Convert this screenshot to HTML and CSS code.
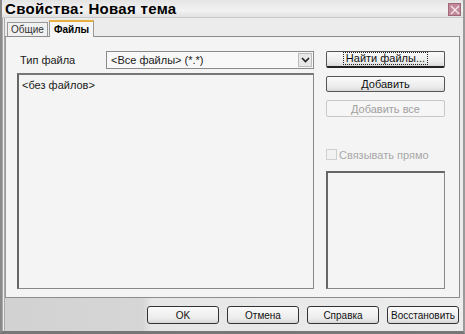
FILE: index.html
```html
<!DOCTYPE html>
<html>
<head>
<meta charset="utf-8">
<link rel="stylesheet" href="styles.css">
</head>
<body>
<div class="window">
  <div class="titlebar">
    <span class="title">Свойства: Новая тема</span>
    <span class="close"><svg width="10" height="10" viewBox="0 0 10 10"><path d="M1 1L9 9M9 1L1 9" stroke="#f4e8ec" stroke-width="1.4"/></svg></span>
  </div>
  <div class="frame">
    <div class="tabs">
      <div class="tab">Общие</div>
      <div class="tab active">Файлы</div>
    </div>
    <div class="panel">
      <div class="left">
        <div class="row">
          <span class="label">Тип файла</span>
          <div class="select">
            <span class="value">&lt;Все файлы&gt; (*.*)</span>
            <span class="arrow"><svg width="9" height="6" viewBox="0 0 9 6"><path d="M1 1L4.5 4.5L8 1" fill="none" stroke="#222" stroke-width="1.6"/></svg></span>
          </div>
        </div>
        <div class="list">&lt;без файлов&gt;</div>
      </div>
      <div class="right">
        <button class="btn default"><span class="focus">Найти файлы...</span></button>
        <button class="btn">Добавить</button>
        <button class="btn disabled">Добавить все</button>
        <div class="check"><span class="box"></span><span>Связывать прямо</span></div>
        <div class="preview"></div>
      </div>
    </div>
    <div class="footer">
      <button class="btn fbtn">OK</button>
      <button class="btn fbtn">Отмена</button>
      <button class="btn fbtn">Справка</button>
      <button class="btn fbtn">Восстановить</button>
    </div>
  </div>
</div>
</body>
</html>
```

FILE: styles.css
```css
* { box-sizing: border-box; }
html, body { margin: 0; padding: 0; }
body {
  width: 465px;
  height: 334px;
  overflow: hidden;
  background: #d8d8d8;
  font-family: "Liberation Sans", Arial, sans-serif;
  font-size: 11px;
  color: #1a1a1a;
}
.window {
  width: 465px;
  height: 334px;
  display: flex;
  flex-direction: column;
  border-left: 2px solid #8a8a8a;
  border-bottom: 3px solid #777;
  border-right: 2px solid #9a9a9a;
}
.titlebar {
  height: 18px;
  display: flex;
  align-items: center;
  justify-content: space-between;
  padding: 0 2px 0 3px;
  background: linear-gradient(#e4e4e4, #f2f2f2 60%, #e2e2e2);
  border-bottom: 1px solid #c8c8c8;
}
.title {
  font-weight: bold;
  font-size: 15px;
  color: #000;
  letter-spacing: 0.3px;
}
.close {
  width: 13px;
  height: 13px;
  margin-top: 2px;
  background: #c08898;
  border: 1px solid #a06878;
  display: flex;
  align-items: center;
  justify-content: center;
}
.frame {
  flex: 1;
  display: flex;
  flex-direction: column;
  border-left: 3px double #aaa;
  background: #ececec;
}
.tabs {
  height: 17px;
  display: flex;
  align-items: flex-end;
  padding-left: 2px;
  margin-top: 1px;
}
.tab {
  height: 14px;
  padding: 0 3px;
  border: 1px solid #999;
  border-bottom: none;
  background: #f0f0f0;
  font-size: 10px;
  line-height: 13px;
  color: #333;
}
.tab.active {
  height: 17px;
  padding: 0 4px;
  margin-left: 1px;
  font-weight: bold;
  color: #000;
  background: #f6f6f6;
  border-top: 2px solid #e8b040;
  line-height: 15px;
  margin-bottom: -1px;
  position: relative;
  z-index: 1;
}
.panel {
  height: 262px;
  display: flex;
  gap: 12px;
  padding: 14px 10px 8px 11px;
  background: #f4f4f4;
  border: 1px solid #8c8c8c;
  border-left: 1px solid #999;
  margin-right: 3px;
}
.left {
  width: 297px;
  display: flex;
  flex-direction: column;
  gap: 4px;
}
.row {
  display: flex;
  align-items: center;
  justify-content: space-between;
  height: 18px;
}
.label {
  padding-left: 3px;
  font-size: 11px;
}
.select {
  width: 208px;
  height: 18px;
  display: flex;
  align-items: center;
  justify-content: space-between;
  border: 1px solid #8a8a8a;
  background: #f8f8f8;
  padding-left: 4px;
}
.value { font-size: 11px; }
.arrow {
  width: 14px;
  height: 14px;
  margin-right: 1px;
  border: 1px solid #bbb;
  background: #e8e8e8;
  display: flex;
  align-items: center;
  justify-content: center;
}
.list {
  flex: 1;
  border: 1px solid #888;
  border-left: 2px solid #666;
  border-top: 2px solid #777;
  background: #f4f4f4;
  padding: 4px 3px;
  font-size: 11px;
}
.right {
  width: 119px;
  display: flex;
  flex-direction: column;
}
.btn {
  font-family: "Liberation Sans", Arial, sans-serif;
  font-size: 11px;
  color: #111;
  height: 17px;
  padding: 0;
  border: 1px solid #555;
  border-radius: 2px;
  background: linear-gradient(#fafafa, #ececec 70%, #d8d8d8);
  display: flex;
  align-items: center;
  justify-content: center;
}
.right .btn { width: 119px; margin-bottom: 8px; }
.right .btn.default {
  border-bottom: 2px solid #222;
  margin-bottom: 8px;
}
.focus {
  border: 1px dotted #222;
  padding: 0 2px;
  line-height: 11px;
}
.btn.disabled {
  color: #a0a0a0;
  border-color: #c8c8c8;
  background: #f6f6f6;
}
.check {
  display: flex;
  align-items: center;
  gap: 2px;
  margin-top: 24px;
  height: 12px;
  color: #a8a8a8;
  font-size: 11px;
}
.box {
  width: 11px;
  height: 11px;
  border: 1px solid #d0d0d0;
  background: #f2f2f2;
}
.preview {
  margin-top: 10px;
  height: 121px;
  border: 1px solid #888;
  border-top: 2px solid #666;
  border-left: 2px solid #666;
  background: #f4f4f4;
}
.footer {
  flex: 1;
  display: flex;
  justify-content: flex-end;
  align-items: flex-start;
  gap: 8px;
  padding: 8px 4px 0 0;
  background: linear-gradient(90deg, #d2d2d2, #d6d6d6 30%, #e6e6e6 32%, #ececec);
}
.fbtn {
  width: 72px;
  height: 18px;
  border: 1px solid #333;
  border-radius: 3px;
  font-size: 10px;
}
```
